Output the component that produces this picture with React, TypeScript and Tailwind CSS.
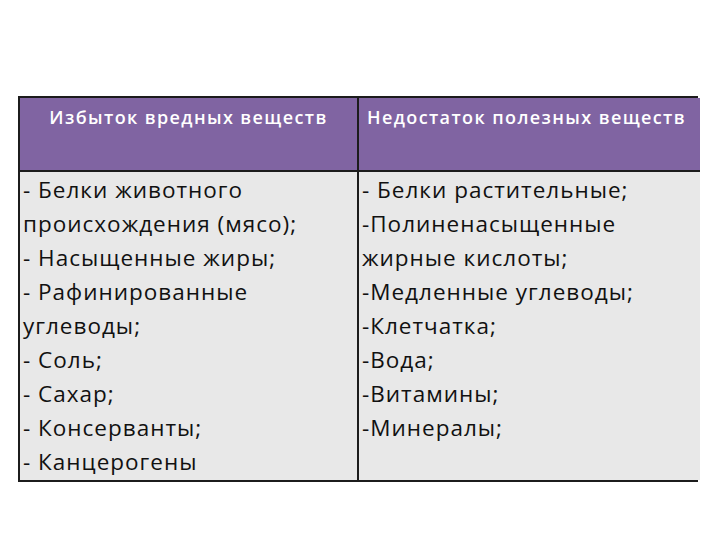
import React from 'react';

const left = [
  '- Белки животного',
  'происхождения (мясо);',
  '- Насыщенные жиры;',
  '- Рафинированные',
  'углеводы;',
  '- Соль;',
  '- Сахар;',
  '- Консерванты;',
  '- Канцерогены',
];

const right = [
  '- Белки растительные;',
  '-Полиненасыщенные',
  'жирные кислоты;',
  '-Медленные углеводы;',
  '-Клетчатка;',
  '-Вода;',
  '-Витамины;',
  '-Минералы;',
];

const App = () => {
  return (
    <div className="w-[720px] h-[540px] bg-white pt-[96px] pl-[18px]" style={{ fontFamily: '"Open Sans", "Noto Sans", sans-serif' }}>
      <div className="w-[680px] grid grid-cols-[339px_341px] border-2 border-[#1c1c1c]">
        {/* header */}
        <div className="h-[74px] bg-[#8064a2] border-b-2 border-r-2 border-[#1c1c1c] text-white font-semibold text-[18px] tracking-[1.4px] text-center pt-[6px] whitespace-nowrap">
          Избыток вредных веществ
        </div>
        <div className="h-[74px] bg-[#8064a2] border-b-2 border-[#1c1c1c] text-white font-semibold text-[18px] tracking-[1.4px] pl-[8px] pt-[6px] whitespace-nowrap">
          Недостаток полезных веществ
        </div>

        {/* body */}
        <div className="h-[308px] bg-[#e8e8e8] border-r-2 border-[#1c1c1c] pl-[3px] pt-[1px] text-[22.5px] tracking-[1px] leading-[34px] text-[#111] whitespace-nowrap">
          {left.map((t, i) => (
            <div key={i}>{t}</div>
          ))}
        </div>
        <div className="h-[308px] bg-[#e8e8e8] pl-[3px] pt-[1px] text-[22.5px] tracking-[1px] leading-[34px] text-[#111] whitespace-nowrap">
          {right.map((t, i) => (
            <div key={i}>{t}</div>
          ))}
        </div>
      </div>
    </div>
  );
};

export default App;
